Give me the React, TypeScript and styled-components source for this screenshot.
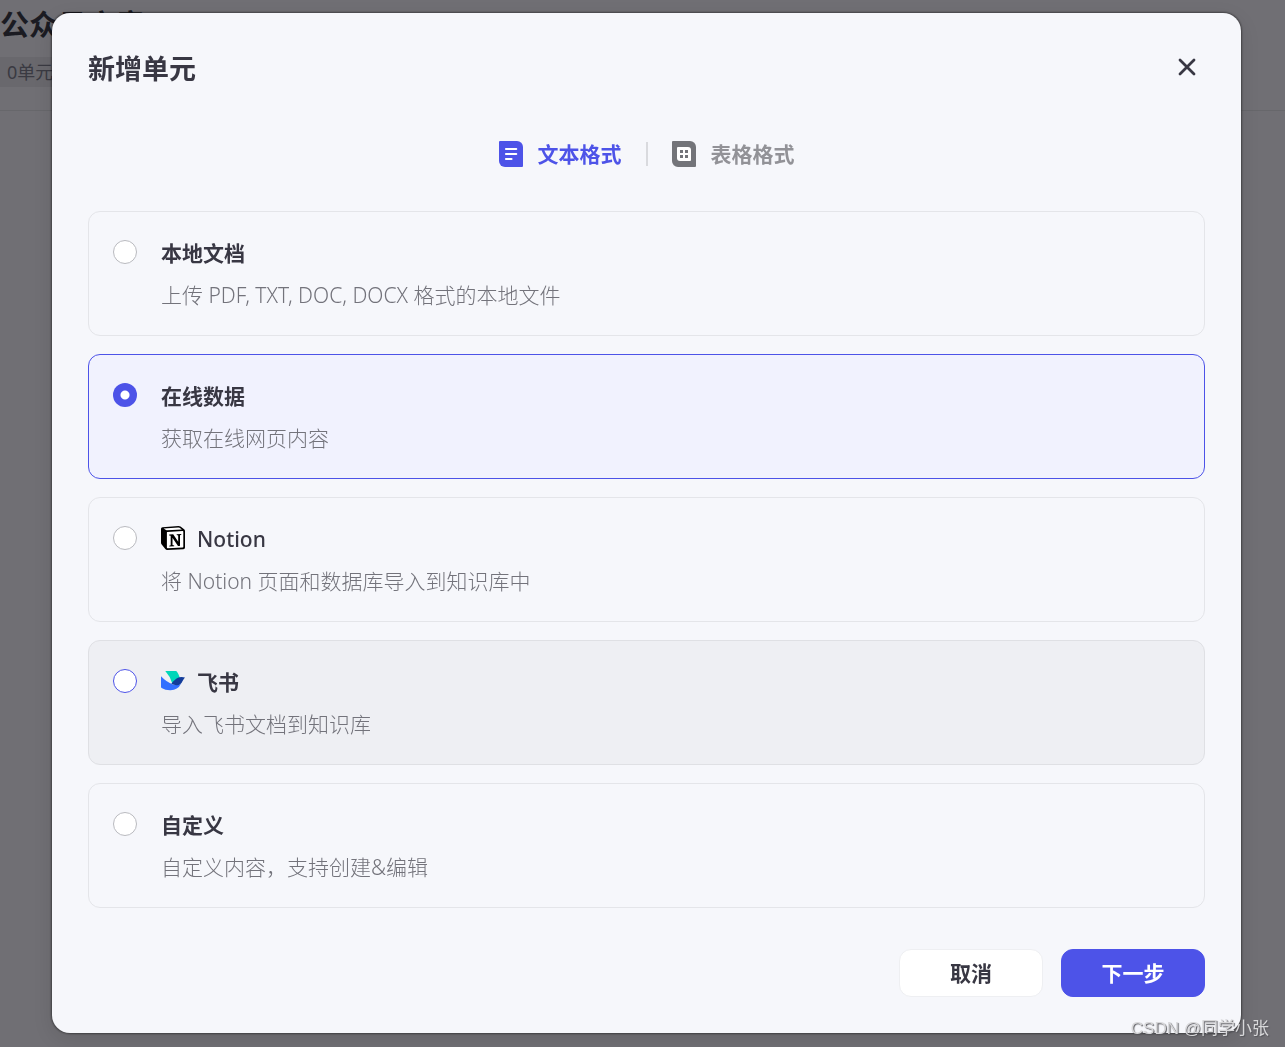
import React, { useState } from "react";
import styled, { createGlobalStyle } from "styled-components";

const GlobalStyle = createGlobalStyle`
  * { box-sizing: border-box; }
  body {
    margin: 0;
    background: #706f74;
    color: #383743;
    font-family: "Noto Sans", "Noto Sans CJK SC", sans-serif;
  }
  h1, h2, h3, p { margin: 0; }
  button, input { font: inherit; margin: 0; }
`;

const Page = styled.main`
  min-height: 100vh;
`;

const PageHeader = styled.header`
  display: flex;
  flex-direction: column;
  align-items: flex-start;
  gap: 12px;
  height: 111px;
  padding-top: 5px;
  border-bottom: 1px solid #67676b;
`;

const PageTitle = styled.h1`
  font-size: 29px;
  line-height: 40px;
  font-weight: 700;
  color: #1b1b22;
`;

const UnitTag = styled.span`
  padding: 0 8px 0 7px;
  border-radius: 0 6px 6px 0;
  background: #69686d;
  color: #3a3a42;
  font-size: 18px;
  line-height: 30px;
`;

const Overlay = styled.div`
  position: fixed;
  inset: 0;
  display: flex;
  align-items: flex-start;
  padding: 13px 44px 14px 52px;
`;

const Dialog = styled.section`
  flex: 1;
  display: flex;
  flex-direction: column;
  padding: 36px;
  border-radius: 18px;
  background: #f6f7fb;
  box-shadow: 0 0 2px 1px rgba(0, 0, 0, 0.4), 0 6px 20px rgba(0, 0, 0, 0.1);
`;

const DialogHeader = styled.header`
  display: flex;
  justify-content: space-between;
  align-items: flex-start;
  height: 40px;
`;

const DialogTitle = styled.h2`
  font-size: 27px;
  line-height: 40px;
  font-weight: 700;
`;

const CloseButton = styled.button`
  display: flex;
  align-items: center;
  justify-content: center;
  width: 36px;
  height: 36px;
  padding: 0;
  border: 0;
  background: none;
  color: #383743;
`;

const Tabs = styled.div`
  display: flex;
  justify-content: center;
  align-items: center;
  gap: 24px;
  margin: 46px 0 38px;
`;

const Tab = styled.button<{ $active: boolean }>`
  display: flex;
  align-items: center;
  gap: 15px;
  height: 38px;
  padding: 0;
  border: 0;
  background: none;
  font-size: 21px;
  line-height: 38px;
  font-weight: 700;
  color: ${(p) => (p.$active ? "#4d53e8" : "#929297")};
`;

const TabDivider = styled.span`
  width: 2px;
  height: 24px;
  background: #d9dade;
`;

const Options = styled.div`
  display: flex;
  flex-direction: column;
  gap: 18px;
`;

type Tone = "plain" | "hovered";

const Card = styled.label<{ $selected: boolean; $tone: Tone }>`
  display: flex;
  gap: 24px;
  padding: 25px 24px 24px;
  border: 1px solid ${(p) => (p.$selected ? "#4d53e8" : p.$tone === "hovered" ? "#dfe0e4" : "#e4e5e9")};
  border-radius: 12px;
  background: ${(p) => (p.$selected ? "#f1f2fe" : p.$tone === "hovered" ? "#eeeff3" : "transparent")};
`;

const Radio = styled.input<{ $tone: Tone }>`
  appearance: none;
  flex: none;
  width: 24px;
  height: 24px;
  margin-top: 3px;
  border: 1px solid ${(p) => (p.$tone === "hovered" ? "#4d53e8" : "#b9babf")};
  border-radius: 50%;
  background: #fff;

  &:checked {
    border: 0;
    background: radial-gradient(circle, #fff 4px, #4d53e8 5px);
  }
`;

const CardBody = styled.span`
  display: flex;
  flex-direction: column;
  gap: 10px;
`;

const CardTitle = styled.span`
  display: flex;
  align-items: center;
  gap: 12px;
  font-size: 21px;
  line-height: 32px;
  font-weight: 700;

  svg {
    margin-bottom: 2px;
  }
`;

const LatinName = styled.span`
  font-weight: 500;
`;

const CardText = styled.span`
  font-size: 21px;
  line-height: 32px;
  font-weight: 300;
  color: #73737b;
`;

const Footer = styled.footer`
  display: flex;
  justify-content: flex-end;
  gap: 18px;
  margin-top: 41px;
`;

const ActionButton = styled.button<{ $primary?: boolean }>`
  width: 144px;
  height: 48px;
  padding: 0;
  border: 1px solid ${(p) => (p.$primary ? "#4d53e8" : "#eeeff2")};
  border-radius: 12px;
  background: ${(p) => (p.$primary ? "#4d53e8" : "#fff")};
  color: ${(p) => (p.$primary ? "#fff" : "#383743")};
  font-size: 21px;
  line-height: 32px;
  font-weight: 700;
`;

const Watermark = styled.span`
  position: fixed;
  right: 16px;
  bottom: 5px;
  font-family: "Liberation Sans", "Noto Sans CJK SC", sans-serif;
  font-size: 17px;
  line-height: 26px;
  color: #d8d8da;
  text-shadow: 1px 1px 1px #55555a;
`;

const CloseIcon = () => (
  <svg width="18" height="18" viewBox="0 0 18 18" fill="none" aria-hidden="true">
    <path d="M2 2l14 14M16 2L2 16" stroke="currentColor" strokeWidth="2.8" strokeLinecap="round" />
  </svg>
);

const TextIcon = () => (
  <svg width="24" height="26" viewBox="0 0 24 26" aria-hidden="true">
    <path d="M1 0h17a6 6 0 0 1 6 6v19a1 1 0 0 1-1 1H6a6 6 0 0 1-6-6V1a1 1 0 0 1 1-1z" fill="#4d53e8" />
    <path d="M7 8h10.200M7 13h10.200M7 18h5.500" stroke="#fff" strokeWidth="2.200" strokeLinecap="round" />
  </svg>
);

const TableIcon = () => (
  <svg width="24" height="26" viewBox="0 0 24 26" aria-hidden="true">
    <path d="M1 0h17a6 6 0 0 1 6 6v19a1 1 0 0 1-1 1H6a6 6 0 0 1-6-6V1a1 1 0 0 1 1-1z" fill="#737479" />
    <path d="M6 6h10a3 3 0 0 1 3 3v10a1 1 0 0 1-1 1H8a3 3 0 0 1-3-3V7a1 1 0 0 1 1-1z" fill="#fff" />
    <path d="M8 9h3v3H8zM13 9h3v3h-3zM8 14h3v3H8zM13 14h3v3h-3z" fill="#737479" />
  </svg>
);

const NotionIcon = () => (
  <svg width="24" height="24" viewBox="0 0 24 24" aria-hidden="true">
    <path d="M1.500 1.200L17.500 0q1.200 0 2 .6l3.600 2.600q.9.700.9 1.800v16.600q0 1.500-1.600 1.600L6.200 24q-1.200 0-1.900-.9L.7 18.500Q0 17.600 0 16.400V2.800Q0 1.400 1.500 1.200z" fill="#000" />
    <path d="M2.600 2.400L17.300 1.400q.8 0 1.300.3l2.300 1.700L6.300 4.300q-.8 0-1.300-.4z" fill="#fff" />
    <path d="M6.300 6L21.700 5.100q.6 0 .6.600v15.100q0 .6-.7.700l-15 .8q-.7 0-.7-.7V6.600q0-.6.400-.6z" fill="#fff" />
    <path d="M8.200 8.500l4-.3 5 7.600V9.400l-1.500-.3v-.9l4.600-.3v.9l-1.300.4v10.600q-1.300.6-2.200 0l-5.300-8v7.300l1.700.4v.8l-4.900.3v-.8l1.400-.5V9.700l-1.500-.3z" fill="#000" />
  </svg>
);

const FeishuIcon = () => (
  <svg width="24" height="24" viewBox="0 0 24 24" aria-hidden="true">
    <path d="M4.300 2h10.500q.8 0 1.200.7 1.800 2.600 2.800 5.700-3.800 1.700-7.500 6.100Q9 7 4.300 2z" fill="#00d6b9" />
    <path d="M0 7.200q5.500 5.900 12 8.200 4 1.400 7.800-.3-2.900 6.100-10.300 6.200Q4.300 21.400.6 18.900 0 18.500 0 17.700z" fill="#3370ff" />
    <path d="M10.300 14.700q3-3.600 5.600-5.400 3.600-2.200 8.100-.8-1.200 1.100-2.400 3.500-2.300 4.800-6.200 4.300-2.400-.3-5.100-1.600z" fill="#133c9a" />
  </svg>
);

interface Option {
  id: string;
  title: string;
  text: string;
  icon?: React.ReactNode;
  latin?: boolean;
  tone?: Tone;
}

const options: Option[] = [
  { id: "local", title: "本地文档", text: "上传 PDF, TXT, DOC, DOCX 格式的本地文件" },
  { id: "online", title: "在线数据", text: "获取在线网页内容" },
  { id: "notion", title: "Notion", text: "将 Notion 页面和数据库导入到知识库中", icon: <NotionIcon />, latin: true },
  { id: "feishu", title: "飞书", text: "导入飞书文档到知识库", icon: <FeishuIcon />, tone: "hovered" },
  { id: "custom", title: "自定义", text: "自定义内容，支持创建&编辑" },
];

export default function App() {
  const [selected, setSelected] = useState("online");

  return (
    <Page>
      <GlobalStyle />
      <PageHeader>
        <PageTitle>公众号文章</PageTitle>
        <UnitTag>0单元</UnitTag>
      </PageHeader>
      <Overlay>
        <Dialog role="dialog" aria-labelledby="dialog-title">
          <DialogHeader>
            <DialogTitle id="dialog-title">新增单元</DialogTitle>
            <CloseButton type="button" aria-label="关闭">
              <CloseIcon />
            </CloseButton>
          </DialogHeader>
          <Tabs role="tablist">
            <Tab type="button" role="tab" aria-selected="true" $active>
              <TextIcon />
              文本格式
            </Tab>
            <TabDivider />
            <Tab type="button" role="tab" aria-selected="false" $active={false}>
              <TableIcon />
              表格格式
            </Tab>
          </Tabs>
          <Options>
            {options.map(({ id, title, text, icon, latin, tone = "plain" }) => (
              <Card key={id} htmlFor={id} $selected={selected === id} $tone={tone}>
                <Radio
                  type="radio"
                  id={id}
                  name="source"
                  checked={selected === id}
                  onChange={() => setSelected(id)}
                  $tone={tone}
                />
                <CardBody>
                  <CardTitle>
                    {icon}
                    {latin ? <LatinName>{title}</LatinName> : title}
                  </CardTitle>
                  <CardText>{text}</CardText>
                </CardBody>
              </Card>
            ))}
          </Options>
          <Footer>
            <ActionButton type="button">取消</ActionButton>
            <ActionButton type="button" $primary>
              下一步
            </ActionButton>
          </Footer>
        </Dialog>
      </Overlay>
      <Watermark>CSDN @同学小张</Watermark>
    </Page>
  );
}
